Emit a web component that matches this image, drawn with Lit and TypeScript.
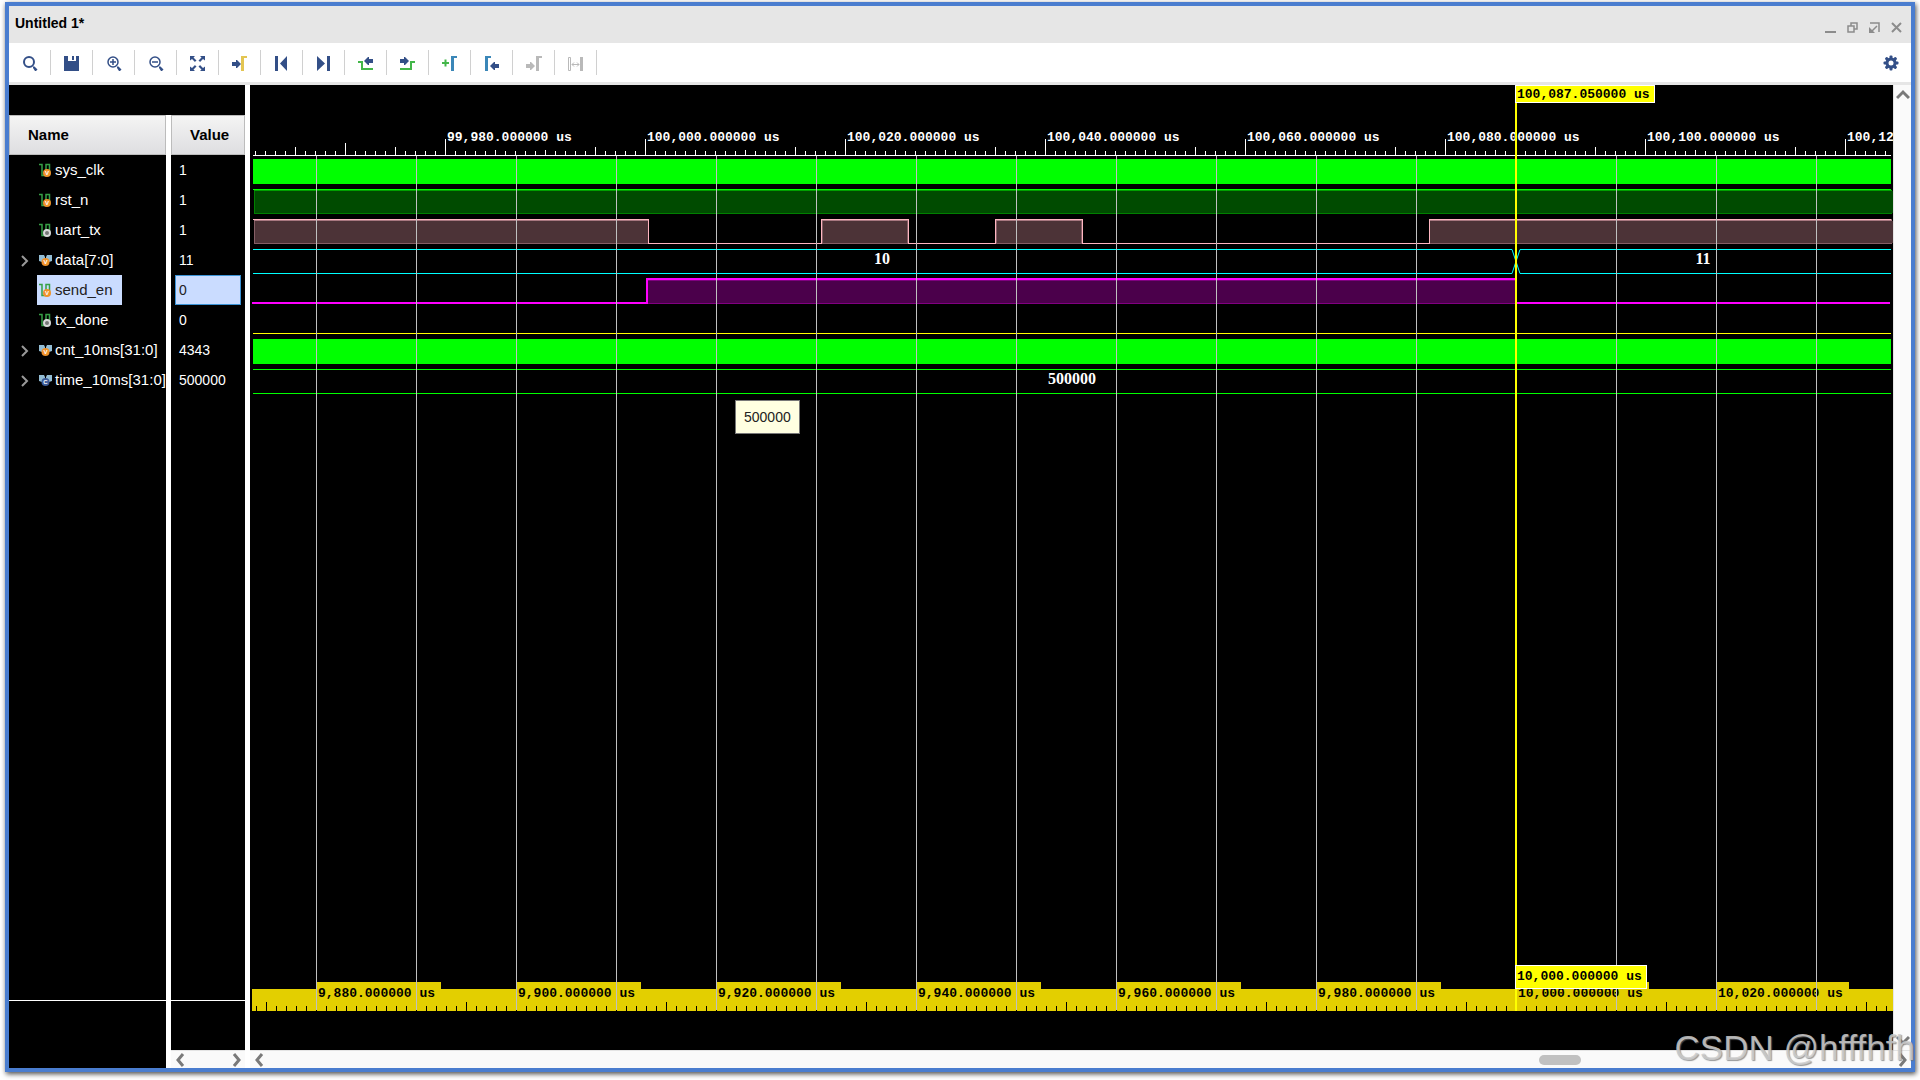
import { LitElement, html, svg, css, nothing, TemplateResult, SVGTemplateResult } from "lit";
import { customElement, property, state } from "lit/decorators.js";

type Kind = "scalar" | "bus";
type Badge = "v" | "o" | "c";

interface Signal {
  name: string;
  value: string;
  kind: Kind;
  badge: Badge;
}

interface Tool {
  label: string;
  icon: SVGTemplateResult;
  disabled?: boolean;
}

const SIGNALS: Signal[] = [
  { name: "sys_clk", value: "1", kind: "scalar", badge: "v" },
  { name: "rst_n", value: "1", kind: "scalar", badge: "v" },
  { name: "uart_tx", value: "1", kind: "scalar", badge: "o" },
  { name: "data[7:0]", value: "11", kind: "bus", badge: "v" },
  { name: "send_en", value: "0", kind: "scalar", badge: "v" },
  { name: "tx_done", value: "0", kind: "scalar", badge: "o" },
  { name: "cnt_10ms[31:0]", value: "4343", kind: "bus", badge: "v" },
  { name: "time_10ms[31:0]", value: "500000", kind: "bus", badge: "c" },
];

const NAVY = "#334f87";
const GREEN = "#43b649";
const TEAL = "#3b87b8";
const GREY = "#b9b9b9";

const arrowRight = (x: number, y: number, color: string) =>
  svg`<path fill=${color} d="M${x} ${y - 2}h4v-2h1l4 4l-4 4h-1v-2h-4z"/>`;
const arrowLeft = (x: number, y: number, color: string) =>
  svg`<path fill=${color} d="M${x + 9} ${y - 2}h-4v-2h-1l-4 4l4 4h1v-2h4z"/>`;
const edge = (x: number, color: string) =>
  svg`<path fill=${color} d="M${x} 1h6v2h-3v13h-3z"/>`;
const lens = (inner: SVGTemplateResult | typeof nothing, width: number) => svg`
  <circle cx="7" cy="7" r="5" fill="none" stroke=${NAVY} stroke-width=${width}/>
  <path d="M11 11.500l1.500 0l3 3l-1.500 1.500h-1l-2-3z" fill=${NAVY}/>${inner}`;

const TOOLS: Tool[] = [
  { label: "Find", icon: lens(nothing, 2) },
  {
    label: "Save",
    icon: svg`<path fill=${NAVY} d="M0 1h4v5h8v-5h3v15h-15z"/><path fill=${NAVY} d="M8 1h2v4h-2z"/>`,
  },
  { label: "Zoom in", icon: lens(svg`<path d="M4 7h6M7 4v6" stroke=${NAVY} stroke-width="1.500"/>`, 1.5) },
  { label: "Zoom out", icon: lens(svg`<path d="M4 7h6" stroke=${NAVY} stroke-width="1.500"/>`, 1.5) },
  {
    label: "Zoom fit",
    icon: svg`<g fill=${NAVY}>
      <path d="M0 1h5l-1.500 1.500l3 3l-1.500 1.500l-3-3l-2 1.500z"/>
      <path d="M15 1h-5l1.500 1.500l-3 3l1.500 1.500l3-3l2 1.500z"/>
      <path d="M0 16h5l-1.500-1.500l3-3l-1.500-1.500l-3 3l-2-1.500z"/>
      <path d="M15 16h-5l1.500-1.500l-3-3l1.500-1.500l3 3l2-1.500z"/></g>
      <path fill="#fff" d="M5.500 6.500h4v4h-4z"/>`,
  },
  { label: "Go to cursor", icon: svg`${arrowRight(0, 9, NAVY)}${edge(9, "#e3c552")}` },
  { label: "Go to time 0", icon: svg`<path fill=${NAVY} d="M1 1h3v15h-3zM13 1v15l-7-7.500z"/>` },
  { label: "Go to last time", icon: svg`<path fill=${NAVY} d="M11 1h3v15h-3zM1 1v15l8-7.500z"/>` },
  {
    label: "Previous transition",
    icon: svg`<path fill="none" stroke=${GREEN} stroke-width="2" d="M0 7h4v7h11"/>${arrowLeft(6, 6, NAVY)}`,
  },
  {
    label: "Next transition",
    icon: svg`<path fill="none" stroke=${GREEN} stroke-width="2" d="M0 14h11v-7h4"/>${arrowRight(0, 6, NAVY)}`,
  },
  {
    label: "Add marker",
    icon: svg`<path d="M0 8h7M3.500 4.500v7" stroke=${GREEN} stroke-width="2"/>${edge(9, TEAL)}`,
  },
  { label: "Previous marker", icon: svg`${edge(1, TEAL)}${arrowLeft(6, 11, NAVY)}` },
  { label: "Next marker", icon: svg`${arrowRight(0, 11, GREY)}${edge(10, GREY)}`, disabled: true },
  {
    label: "Swap cursors",
    icon: svg`<path fill="none" stroke=${GREY} d="M0.500 2.500h2v13h-2z"/><path fill=${GREY} d="M12 2h3v14h-3z"/>
      <path fill="none" stroke=${GREY} d="M4 9.500h7M6 7.500l-2 2l2 2M9 7.500l2 2l-2 2"/>`,
    disabled: true,
  },
];

const icon = (body: SVGTemplateResult, size = 16): TemplateResult =>
  html`<svg class="glyph" width=${size} height=${size} viewBox="0 0 ${size} ${size}" aria-hidden="true">${body}</svg>`;

const chevron = (d: string): TemplateResult =>
  html`<svg class="glyph" width="14" height="14" viewBox="0 0 14 14" aria-hidden="true">
    <path d=${d} fill="none" stroke="#7a7a7a" stroke-width="3" />
  </svg>`;
const LEFT = "M10 1L5 7l5 6";
const RIGHT = "M5 1l5 6l-5 6";
const UP = "M1 10l6-6l6 6";
const DOWN = "M1 4l6 6l6-6";

const BADGE_FILL: Record<Badge, string> = { v: "#f0922a", o: "#d8d8d8", c: "#3c5a96" };

const badge = (kind: Badge, cx: number, cy: number) => svg`
  <circle cx=${cx} cy=${cy} r="4" fill=${BADGE_FILL[kind]}/>
  ${
    kind === "o"
      ? svg`<circle cx=${cx} cy=${cy} r="2" fill="#777"/>`
      : svg`<text x=${cx} y=${cy + 2} text-anchor="middle" font-family="Liberation Sans, sans-serif" font-weight="700" font-size="6" fill="#fff">${kind.toUpperCase()}</text>`
  }`;

const signalIcon = (s: Signal): TemplateResult =>
  html`<svg class="glyph" width="14" height="16" viewBox="0 0 14 16" aria-hidden="true">
    ${s.kind === "scalar"
      ? svg`<path d="M0 2.500h3v11h4v-11h3.500v7" fill="none" stroke="#36a046" stroke-width="1.500"/>${badge(s.badge, 8, 11)}`
      : svg`<path d="M0 3h5l1 2v6l-3-1l-3-1zM13 3h-5l-1 2v6l3-1l3-1z" fill="#93bdd4"/>${badge(s.badge, 6.5, 10)}`}
  </svg>`;

/* Ruler: 10 px per microsecond, one label every 20 us. */
const TOP_LABELS = [
  { x: 192, text: "99,980.000000 us" },
  { x: 392, text: "100,000.000000 us" },
  { x: 592, text: "100,020.000000 us" },
  { x: 792, text: "100,040.000000 us" },
  { x: 992, text: "100,060.000000 us" },
  { x: 1192, text: "100,080.000000 us" },
  { x: 1392, text: "100,100.000000 us" },
  { x: 1592, text: "100,120.000000 us" },
];
const BOTTOM_LABELS = [
  { x: 66, text: "9,880.000000 us" },
  { x: 266, text: "9,900.000000 us" },
  { x: 466, text: "9,920.000000 us" },
  { x: 666, text: "9,940.000000 us" },
  { x: 866, text: "9,960.000000 us" },
  { x: 1066, text: "9,980.000000 us" },
  { x: 1266, text: "10,000.000000 us" },
  { x: 1466, text: "10,020.000000 us" },
];
const CURSOR_X = 1265;
const BAUD_EDGES = [395, 568, 655, 742, 829, 1176];

const topTick = (x: number): number => {
  if ((x - 192) % 200 === 0) return 16;
  if (x === 92) return 12;
  if ((x - 142) % 200 === 0 || x === 42) return 8;
  if ((x - 42) % 50 === 0) return 5;
  return 4;
};

@customElement("wave-ruler")
export class WaveRuler extends LitElement {
  @property() edge: "top" | "bottom" = "top";

  static styles = css`
    :host {
      display: block;
    }
    svg {
      display: block;
      width: 100%;
      overflow: visible;
      shape-rendering: crispEdges;
    }
    .top {
      height: 70px;
    }
    .bottom {
      height: 29px;
    }
    text {
      font: 700 13px "Liberation Mono", monospace;
      white-space: pre;
    }
  `;

  render() {
    if (this.edge === "top") {
      const ticks = Array.from({ length: 164 }, (_, i) => 2 + i * 10);
      return html`<svg class="top">
        ${ticks.map((x) => {
          const h = topTick(x);
          return svg`<rect x=${x} y=${70 - h} width="1" height=${h} fill="#fff"/>`;
        })}
        ${TOP_LABELS.map((l) => svg`<text x=${l.x + 2} y="56" fill="#fff">${l.text}</text>`)}
        <rect x="0" y="70" width="100%" height="1" fill="#fff" />
      </svg>`;
    }
    const ticks = Array.from({ length: 164 }, (_, i) => 6 + i * 10);
    return html`<svg class="bottom">
      <rect x="2" y="7" width="100%" height="22" fill="#e3cf00" />
      ${BOTTOM_LABELS.map(
        (l) => svg`<rect x=${l.x} y="0" width=${l.text.length * 8 + 5} height="8" fill="#e3cf00"/>
          <text x=${l.x + 2} y="15" fill="#000">${l.text}</text>`,
      )}
      ${ticks.map((x) => {
        const h = (x - 16) % 200 === 0 ? 9 : 5;
        return svg`<rect x=${x} y=${29 - h} width="1" height=${h} fill="#000"/>`;
      })}
    </svg>`;
  }
}

@customElement("wave-lanes")
export class WaveLanes extends LitElement {
  static styles = css`
    :host {
      display: block;
      padding: 0 2px 0 3px;
    }
    .lane {
      display: block;
      width: 100%;
      height: 30px;
      overflow: visible;
      shape-rendering: crispEdges;
    }
    text {
      font: 700 16px "Liberation Serif", serif;
      fill: #fff;
      text-anchor: middle;
    }
  `;

  private solid() {
    return svg`<rect y="4" width="100%" height="25" fill="#0f0"/>`;
  }

  private pulse(x1: number, x2: number) {
    return svg`
      <rect x=${x1} y="4" width=${x2 - x1} height="25" fill="#855f66"/>
      <rect x=${x1} y="5" width=${x2 - x1} height="1" fill="#a87880"/>
      <rect x=${x1 + 2} y="6" width=${x2 - x1 - 3} height="22" fill="#4c3337"/>`;
  }

  render() {
    const [a, b, c, d, e, f] = BAUD_EDGES;
    const pink = "#ffb6c1";
    const cross = CURSOR_X - 2;
    return html`
      <svg class="lane">${this.solid()}</svg>
      <svg class="lane">
        <rect x="1" y="5" width="100%" height="24" fill="#008000" />
        <rect x="1" y="5" width="100%" height="1" fill="#00a000" />
        <rect x="2" y="6" width="100%" height="22" fill="#004b00" />
        <rect y="4" width="100%" height="1" fill="#0f0" />
      </svg>
      <svg class="lane">
        <rect x="1" y="4" width="100%" height="25" fill="#855f66" />
        <rect x="1" y="5" width="100%" height="1" fill="#a87880" />
        <rect x="2" y="6" width="100%" height="22" fill="#4c3337" />
        <rect y="4" width="100%" height="1" fill=${pink} />
        <rect x=${a} y="4" width=${f - a} height="25" fill="#000" />
        ${this.pulse(b, c)}${this.pulse(d, e)}
        <path
          d="M${a + 0.5} 4v24.500H${b + 0.5}V4.500H${c + 0.5}V28.500H${d + 0.5}V4.500H${e + 0.5}V28.500H${f + 0.5}V4"
          fill="none"
          stroke=${pink}
        />
      </svg>
      <svg class="lane">
        <rect y="4" width="100%" height="1" fill="#0ff" />
        <rect y="28" width="100%" height="1" fill="#0ff" />
        <rect x=${cross - 4} y="4" width="8" height="25" fill="#000" />
        <path
          d="M${cross - 4} 4.500l8 24M${cross - 4} 28.500l8-24"
          fill="none"
          stroke="#0ff"
          shape-rendering="auto"
        />
        <text x="629" y="19">10</text>
        <text x="1450" y="19">11</text>
      </svg>
      <svg class="lane">
        <rect x="-1" y="27" width="100%" height="2" fill="#f0f" />
        <rect x="393" y="3" width="869" height="26" fill="#800080" />
        <rect x="395" y="6" width="867" height="22" fill="#4b004b" />
        <path d="M394 29V4H1262" fill="none" stroke="#f0f" stroke-width="2" />
      </svg>
      <svg class="lane"><rect y="28" width="100%" height="1" fill="#ff0" /></svg>
      <svg class="lane">${this.solid()}</svg>
      <svg class="lane">
        <rect y="4" width="100%" height="1" fill="#0f0" />
        <rect y="28" width="100%" height="1" fill="#0f0" />
        <text x="50%" y="19">500000</text>
      </svg>
    `;
  }
}

@customElement("app-root")
export class AppRoot extends LitElement {
  @state() private selected = "send_en";

  static styles = css`
    :host {
      display: block;
      box-sizing: border-box;
      height: 100vh;
      min-height: 480px;
      padding: 2px 5px 8px;
      overflow: hidden;
      position: relative;
      background: #fff;
      color: #000;
      font: 14px/18px "Liberation Sans", Arial, sans-serif;
    }
    * {
      box-sizing: border-box;
    }
    button {
      display: flex;
      align-items: center;
      justify-content: center;
      margin: 0;
      padding: 0;
      border: 0;
      background: none;
      font: inherit;
      color: inherit;
    }
    .glyph {
      display: block;
      flex: none;
    }
    .window {
      display: flex;
      flex-direction: column;
      height: 100%;
      border: 4px solid #4a7dcf;
      box-shadow: 1px 2px 5px rgba(0, 0, 0, 0.7);
      background: #fff;
    }
    .titlebar {
      display: flex;
      justify-content: space-between;
      height: 37px;
      padding: 8px 9px 0 6px;
      background: #e6e6e6;
    }
    h1 {
      margin: 0;
      font-size: 14px;
      line-height: 18px;
    }
    .controls {
      display: flex;
      align-items: flex-start;
      gap: 11px;
      padding-top: 8px;
    }
    .toolbar {
      display: flex;
      align-items: center;
      height: 42px;
      padding-right: 12px;
      border-bottom: 3px solid #e6e6e6;
    }
    .tool {
      width: 42px;
      height: 25px;
      border-right: 1px solid #d0d0d0;
      justify-content: flex-start;
      padding-left: 13px;
    }
    .settings {
      margin-left: auto;
    }
    .body {
      display: flex;
      flex: 1;
      min-height: 0;
    }
    .signals {
      display: flex;
      flex-direction: column;
      flex: none;
      width: 241px;
      padding-top: 30px;
      border-right: 5px solid #fff;
      background: #000;
    }
    table {
      width: 100%;
      table-layout: fixed;
      border-collapse: separate;
      border-spacing: 0;
      color: #fff;
    }
    .value-col {
      width: 79px;
    }
    th,
    td {
      padding: 0;
      text-align: left;
      font-weight: 400;
    }
    .divided {
      border-left: 5px solid #fff;
    }
    .head {
      display: flex;
      align-items: center;
      height: 40px;
      padding-left: 18px;
      border: 1px solid #bcbcbc;
      background: linear-gradient(#f4f4f4, #dedee1);
      color: #000;
      font-size: 15px;
      font-weight: 700;
    }
    .name {
      display: flex;
      height: 30px;
      font-size: 15px;
    }
    .twist {
      width: 28px;
      flex: none;
      padding: 2px 0 0 4px;
    }
    .pick {
      gap: 2px;
      padding: 0 9px 0 2px;
      white-space: nowrap;
    }
    .value {
      display: flex;
      align-items: center;
      height: 30px;
      margin: 0 4px;
      padding-left: 4px;
    }
    .selected {
      background: #cadcff;
      color: #222;
    }
    .value.selected {
      padding-left: 3px;
      border: 1px solid #3b93d6;
    }
    .below {
      display: flex;
      flex: 1;
      min-height: 0;
    }
    .below-name,
    .below-value {
      display: flex;
      flex-direction: column;
      justify-content: flex-end;
    }
    .below-name {
      flex: 1;
    }
    .below-value {
      width: 79px;
    }
    .rule {
      height: 1px;
      background: #fff;
    }
    .pad {
      height: 49px;
    }
    .bar-space {
      height: 18px;
    }
    .scroll-x {
      display: flex;
      align-items: center;
      height: 18px;
      background: #fafafa;
      border-top: 1px solid #e4e4e4;
    }
    .scroll-x button {
      width: 18px;
      height: 18px;
      flex: none;
    }
    .track {
      display: grid;
      flex: 1;
      grid-template-columns: 61fr 42px 15fr;
    }
    .thumb {
      grid-column: 2;
      height: 10px;
      border-radius: 5px;
      background: #c1c1c1;
    }
    .waves {
      display: grid;
      flex: 1;
      min-width: 0;
      grid-template-columns: minmax(0, 1fr) 18px;
      grid-template-rows: minmax(0, 1fr) 18px;
    }
    .waves .scroll-x {
      grid-column: 1 / -1;
    }
    .plot {
      position: relative;
      display: flex;
      flex-direction: column;
      overflow: hidden;
      padding-bottom: 39px;
      background: #000;
    }
    .plot .time {
      margin: 0 2px 0 3px;
    }
    .grow {
      flex: 1;
    }
    .grid {
      position: absolute;
      inset: 71px 0 40px 66px;
      background: repeating-linear-gradient(90deg, #c0c0c0 0 1px, transparent 1px 100px);
    }
    .cursor {
      position: absolute;
      inset: 0 auto 39px 1265px;
      display: flex;
      flex-direction: column;
      justify-content: space-between;
      align-items: flex-start;
      padding-bottom: 22px;
      border-left: 2px solid #ff0;
    }
    .flag {
      margin-left: -2px;
      padding: 2px 4px 0 1px;
      border: 1px solid #fff;
      background: #ff0;
      font: 700 13px/14px "Liberation Mono", monospace;
      white-space: pre;
    }
    .flag.low {
      padding-top: 0;
      line-height: 22px;
    }
    .tip {
      position: absolute;
      left: 485px;
      top: 315px;
      padding: 8px;
      border: 1px solid #777;
      background: #ffffe1;
      color: #222;
      line-height: 16px;
    }
    .scroll-y {
      display: flex;
      flex-direction: column;
      justify-content: space-between;
      background: #fafafa;
      border-left: 1px solid #e4e4e4;
    }
    .scroll-y button {
      width: 18px;
      height: 20px;
    }
    .watermark {
      position: absolute;
      right: 5px;
      bottom: 12px;
      font-size: 35px;
      line-height: 40px;
      color: rgba(205, 205, 205, 0.85);
      text-shadow: 1px 1px 1px rgba(110, 110, 110, 0.7);
      white-space: nowrap;
      pointer-events: none;
    }
  `;

  private renderRow(s: Signal) {
    const on = s.name === this.selected ? "selected" : "";
    return html`<tr>
      <td>
        <div class="name">
          ${s.kind === "bus"
            ? html`<button class="twist" aria-label="Expand ${s.name}">
                <svg class="glyph" width="8" height="12" viewBox="0 0 8 12">
                  <path d="M1 1l5 5l-5 5" fill="none" stroke="#999" stroke-width="2" />
                </svg>
              </button>`
            : html`<span class="twist"></span>`}
          <button class="pick ${on}" @click=${() => (this.selected = s.name)}>${signalIcon(s)}${s.name}</button>
        </div>
      </td>
      <td class="divided"><div class="value ${on}">${s.value}</div></td>
    </tr>`;
  }

  render() {
    return html`
      <main class="window">
        <header class="titlebar">
          <h1>Untitled 1*</h1>
          <div class="controls">
            <button aria-label="Minimize">${icon(svg`<path fill="#8c8c8c" d="M0 9h11v2h-11z"/>`, 11)}</button>
            <button aria-label="Restore">
              ${icon(
                svg`<path fill="none" stroke="#8c8c8c" stroke-width="1.500" d="M1 4h6v6h-6zM4 4v-3h6v6h-3"/>`,
                11,
              )}
            </button>
            <button aria-label="Float">
              ${icon(
                svg`<path fill="none" stroke="#8c8c8c" stroke-width="1.500" d="M1 1h9v9M8 4l-5 5"/><path fill="#8c8c8c" d="M0 5v6h6z"/>`,
                11,
              )}
            </button>
            <button aria-label="Close">
              ${icon(svg`<path fill="none" stroke="#8c8c8c" stroke-width="2" d="M1 1l9 9M10 1l-9 9"/>`, 11)}
            </button>
          </div>
        </header>

        <nav class="toolbar" aria-label="Waveform tools">
          ${TOOLS.map(
            (t) => html`<button class="tool" aria-label=${t.label} ?disabled=${!!t.disabled}>${icon(t.icon)}</button>`,
          )}
          <button class="settings" aria-label="Settings">
            ${icon(
              svg`<g fill=${NAVY}>${[0, 45, 90, 135].map(
                (a) => svg`<rect x="6.500" y="0.500" width="3" height="15" rx="1" transform="rotate(${a} 8 8)"/>`,
              )}<circle cx="8" cy="8" r="5.500"/></g><circle cx="8" cy="8" r="2.500" fill="#fff"/>`,
            )}
          </button>
        </nav>

        <div class="body">
          <section class="signals" aria-label="Signals">
            <table>
              <colgroup>
                <col />
                <col class="value-col" />
              </colgroup>
              <thead>
                <tr>
                  <th scope="col"><div class="head">Name</div></th>
                  <th scope="col" class="divided"><div class="head">Value</div></th>
                </tr>
              </thead>
              <tbody>
                ${SIGNALS.map((s) => this.renderRow(s))}
              </tbody>
            </table>
            <div class="below">
              <div class="below-name">
                <div class="rule"></div>
                <div class="pad"></div>
                <div class="bar-space"></div>
              </div>
              <div class="below-value divided">
                <div class="rule"></div>
                <div class="pad"></div>
                <div class="scroll-x">
                  <button aria-label="Scroll values left">${chevron(LEFT)}</button>
                  <span class="grow"></span>
                  <button aria-label="Scroll values right">${chevron(RIGHT)}</button>
                </div>
              </div>
            </div>
          </section>

          <section class="waves" aria-label="Waveforms">
            <div class="plot">
              <wave-ruler class="time" edge="top"></wave-ruler>
              <wave-lanes></wave-lanes>
              <div class="grow"></div>
              <wave-ruler edge="bottom"></wave-ruler>
              <div class="grid"></div>
              <div class="cursor">
                <span class="flag">100,087.050000 us</span>
                <span class="flag low">10,000.000000 us</span>
              </div>
              <div class="tip" role="tooltip">500000</div>
            </div>
            <div class="scroll-y">
              <button aria-label="Scroll up">${chevron(UP)}</button>
              <button aria-label="Scroll down">${chevron(DOWN)}</button>
            </div>
            <div class="scroll-x">
              <button aria-label="Scroll left">${chevron(LEFT)}</button>
              <div class="track"><span class="thumb"></span></div>
              <button aria-label="Scroll right">${chevron(RIGHT)}</button>
            </div>
          </section>
        </div>
      </main>
      <div class="watermark">CSDN @hfffhfh</div>
    `;
  }
}
